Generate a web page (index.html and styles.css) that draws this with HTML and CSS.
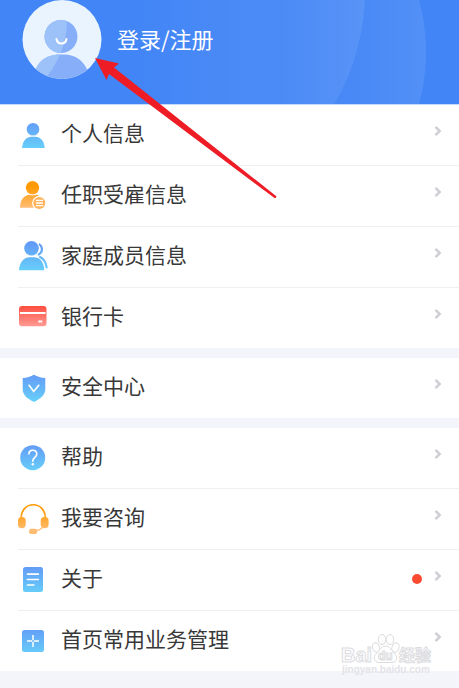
FILE: index.html
```html
<!DOCTYPE html>
<html lang="zh-CN">
<head>
<meta charset="utf-8">
<meta name="viewport" content="width=device-width, initial-scale=1">
<title>个人中心</title>
<link rel="stylesheet" href="styles.css">
</head>
<body>
<svg class="defs" aria-hidden="true">
  <defs>
    <linearGradient id="blue" x1="0" y1="0" x2="0" y2="32" gradientUnits="userSpaceOnUse"><stop offset=".1" stop-color="#639af6"/><stop offset="1" stop-color="#67d2fa"/></linearGradient>
    <linearGradient id="orange" x1="0" y1="0" x2="0" y2="32" gradientUnits="userSpaceOnUse"><stop offset=".25" stop-color="#ff9a05"/><stop offset=".9" stop-color="#ffbd74"/></linearGradient>
    <linearGradient id="red" x1="0" y1="5" x2="0" y2="25" gradientUnits="userSpaceOnUse"><stop offset="0" stop-color="#ff4e3f"/><stop offset="1" stop-color="#ff9a92"/></linearGradient>
    <symbol id="chevron" viewBox="0 0 8 12"><path d="M1.5 1.8 5.7 6 1.5 10.2" fill="none" stroke="#cfcfd5" stroke-width="2.5"/></symbol>
  </defs>
</svg>

<header class="header">
  <svg class="header-art" width="459" height="104" viewBox="0 0 459 104" aria-hidden="true">
    <defs>
      <linearGradient id="wave1" x1="130" y1="0" x2="365" y2="0" gradientUnits="userSpaceOnUse"><stop offset="0" stop-color="#fff" stop-opacity="0"/><stop offset=".65" stop-color="#fff" stop-opacity=".02"/><stop offset="1" stop-color="#fff" stop-opacity=".09"/></linearGradient>
      <linearGradient id="wave2" x1="130" y1="0" x2="426" y2="0" gradientUnits="userSpaceOnUse"><stop offset="0" stop-color="#fff" stop-opacity="0"/><stop offset=".35" stop-color="#fff" stop-opacity=".03"/><stop offset=".75" stop-color="#fff" stop-opacity=".03"/><stop offset="1" stop-color="#fff" stop-opacity=".09"/></linearGradient>
    </defs>
    <circle cx="230" cy="52" r="196" fill="url(#wave2)"/>
    <circle cx="137" cy="-10" r="228" fill="url(#wave1)"/>
  </svg>
  <a class="login" href="#login">
    <svg class="avatar" viewBox="0 0 80 80" aria-hidden="true">
      <defs>
        <clipPath id="disc"><circle cx="40" cy="39.500" r="39.500"/></clipPath>
        <clipPath id="person"><circle cx="39" cy="36.500" r="16.500"/><path d="M12 80C12 64 22 54.500 38 54.500h4c14 0 24 9.500 26 25.500Z"/></clipPath>
      </defs>
      <circle cx="40" cy="39.500" r="39.500" fill="#e9f4ff"/>
      <g clip-path="url(#disc)">
        <g clip-path="url(#person)">
          <path d="M0 0h80v80H0Z" fill="#87aff9"/>
          <path d="M0 0h43Q46 20 44 34 39 61 22 80H0Z" fill="#9dc2f9"/>
        </g>
      </g>
      <path d="M34.500 39c1 6 9 6 10 0" fill="none" stroke="#fff" stroke-width="2" stroke-linecap="round"/>
    </svg>
    <span class="login-text">登录/注册</span>
  </a>
</header>

<main>
  <ul class="group">
    <li><a class="row" href="#profile">
      <svg class="icon" viewBox="0 0 32 32" fill="url(#blue)" aria-hidden="true"><circle cx="15" cy="11.300" r="6.300"/><path d="M4 30C4.500 22.500 9 18.700 13.500 18.700h3.700c5 0 9.200 4 9.500 11.300Z"/></svg>
      <span class="label">个人信息</span><svg class="chevron" aria-hidden="true"><use href="#chevron"/></svg></a></li>
    <li><a class="row" href="#employment">
      <svg class="icon" viewBox="0 0 32 32" aria-hidden="true"><g fill="url(#orange)"><path d="M2 28.700C2 20.500 6 17 11 15.500h8l4.500 3V28.700Z"/><circle cx="14.500" cy="8.700" r="7.700" fill="#fff"/><circle cx="14.500" cy="8.700" r="6.700"/></g><circle cx="21.300" cy="24" r="7.200" fill="#fff"/><circle cx="21.300" cy="24" r="6" fill="#ffb45c"/><path d="M18 21.300h7M18 24h7M18 26.700h7" stroke="#fff" stroke-width="1.300"/></svg>
      <span class="label">任职受雇信息</span><svg class="chevron" aria-hidden="true"><use href="#chevron"/></svg></a></li>
    <li><a class="row" href="#family">
      <svg class="icon" viewBox="0 0 32 32" aria-hidden="true"><g fill="none" stroke="url(#blue)" stroke-linecap="round"><path d="M21.500 4.500c3.500 2.800 3.300 7.700-.8 10" stroke-width="2.200"/><path d="M22 17c4 2 6 5.500 6.700 10.500" stroke-width="2.100"/></g><g fill="url(#blue)"><circle cx="13.500" cy="8.300" r="8.200" fill="#fff"/><circle cx="13.500" cy="8.300" r="7.300"/><path d="M1 30.300C1.500 22 6 17.300 11.500 17.300h4.300c6 0 10.200 4.500 10.500 13Z"/></g></svg>
      <span class="label">家庭成员信息</span><svg class="chevron" aria-hidden="true"><use href="#chevron"/></svg></a></li>
    <li><a class="row" href="#cards">
      <svg class="icon" viewBox="0 0 32 32" aria-hidden="true"><rect x="1" y="5" width="27.500" height="20.300" rx="3" fill="url(#red)"/><path d="M2 12h25.500M20.300 20.500h4" stroke="#fff" stroke-width="1.800"/></svg>
      <span class="label">银行卡</span><svg class="chevron" aria-hidden="true"><use href="#chevron"/></svg></a></li>
  </ul>

  <ul class="group">
    <li><a class="row" href="#security">
      <svg class="icon" viewBox="0 0 32 32" aria-hidden="true"><path d="M16 3.700c3.500 2 7 3 11.300 3.300V18c0 6-4.500 9.500-11.300 13C9 27.500 4.700 24 4.700 18V7C9 6.700 12.500 5.700 16 3.700Z" fill="url(#blue)"/><path d="M10.700 13.800 15.700 20.500 21.200 13.800" fill="none" stroke="#fff" stroke-width="1.600"/></svg>
      <span class="label">安全中心</span><svg class="chevron" aria-hidden="true"><use href="#chevron"/></svg></a></li>
  </ul>

  <ul class="group">
    <li><a class="row" href="#help">
      <svg class="icon" viewBox="0 0 32 32" aria-hidden="true"><circle cx="14.700" cy="16.700" r="12.500" fill="url(#blue)"/><path d="M10.800 13.500c0-5.500 8-5.500 8-.5 0 3.200-4 3.500-4 6.800v1" fill="none" stroke="#fff" stroke-width="1.600"/><circle cx="14.800" cy="23.300" r="1.200" fill="#fff"/></svg>
      <span class="label">帮助</span><svg class="chevron" aria-hidden="true"><use href="#chevron"/></svg></a></li>
    <li><a class="row" href="#consult">
      <svg class="icon" viewBox="0 0 32 32" aria-hidden="true"><path d="M3.200 17C2.500-2 28-2 27.300 17" fill="none" stroke="url(#orange)" stroke-width="1.700"/><g fill="url(#orange)"><rect x="0" y="15" width="7.700" height="11.300" rx="3.700"/><rect x="22.700" y="15" width="7.900" height="11.300" rx="3.700"/><rect x="11" y="26.800" width="8.200" height="5.200" rx="2.600"/></g><path d="M18 28.500q5-.5 7-4" fill="none" stroke="#ffbd74" stroke-width="1.500"/></svg>
      <span class="label">我要咨询</span><svg class="chevron" aria-hidden="true"><use href="#chevron"/></svg></a></li>
    <li><a class="row" href="#about">
      <svg class="icon" viewBox="0 0 32 32" aria-hidden="true"><rect x="5" y="4" width="20" height="25" rx="2.500" fill="url(#blue)"/><path d="M9.500 11.200h10.800M9.500 16.500h10.800M9.500 22h6.300" stroke="#fff" stroke-width="1.700" stroke-linecap="round"/></svg>
      <span class="label">关于</span><span class="dot"></span><svg class="chevron" aria-hidden="true"><use href="#chevron"/></svg></a></li>
    <li><a class="row" href="#shortcuts">
      <svg class="icon" viewBox="0 0 32 32" aria-hidden="true"><rect x="4" y="6" width="22" height="22" rx="2.500" fill="url(#blue)"/><path d="M9 17h12M15 11v12" stroke="#fff" stroke-width="1.500"/><circle cx="15" cy="17" r="1" fill="#64b8f8"/></svg>
      <span class="label">首页常用业务管理</span><svg class="chevron" aria-hidden="true"><use href="#chevron"/></svg></a></li>
  </ul>
</main>

<svg class="pointer" width="190" height="150" viewBox="90 50 190 150" aria-hidden="true"><path d="M95 58 119 63.500 114 67.500 276.300 196.300Q276.500 198.500 274.500 198L109 74 106.500 80Z" fill="#ee1c25"/></svg>

<svg class="watermark" width="96" height="48" viewBox="338 632 96 48" aria-hidden="true">
  <text class="mark-main" x="341" y="662">Bai</text>
  <g fill="#fff" stroke="#dcdcdf" stroke-width="1">
    <ellipse cx="376" cy="647.500" rx="3.500" ry="4.800" transform="rotate(-20 376 647.500)"/>
    <ellipse cx="382" cy="639.500" rx="3.700" ry="5"/>
    <ellipse cx="390" cy="639.500" rx="3.700" ry="5"/>
    <ellipse cx="395.500" cy="647.500" rx="3.500" ry="4.800" transform="rotate(20 395.500 647.500)"/>
    <path d="M385.500 646c5 0 6 5 9.500 8 3 3 2 8.500-3 8.500h-13c-5 0-6-5.500-3-8.500 3.500-3 4.500-8 9.500-8Z"/>
  </g>
  <text class="mark-du" x="378" y="660">du</text>
  <text class="mark-cn" x="399" y="661">经验</text>
  <text class="mark-url" x="342" y="673">jingyan.baidu.com</text>
</svg>
</body>
</html>
```
FILE: styles.css
```css
* {
  box-sizing: border-box;
}

body {
  position: relative;
  margin: 0;
  min-height: 100vh;
  background: #f4f5fa;
  color: #383838;
  font-family: "Noto Sans CJK SC", sans-serif;
}

a {
  color: inherit;
  text-decoration: none;
}

.defs {
  position: absolute;
  width: 0;
  height: 0;
}

.header {
  position: relative;
  padding: 0 22px 24px;
  border-bottom: 1px solid #c4dafc;
  background: #4285f6;
  overflow: hidden;
}

.header-art {
  position: absolute;
  top: 0;
  left: 0;
}

.login {
  position: relative;
  display: flex;
  align-items: center;
  gap: 15px;
  color: #fff;
  font-size: 22px;
  line-height: 32px;
}

.login-text {
  padding-bottom: 4px;
}

.avatar {
  width: 80px;
  height: 80px;
}

.group {
  margin: 0 0 10px;
  padding: 0 0 0 18px;
  background: #fff;
  list-style: none;
}

.group li + li {
  border-top: 1px solid #efeff1;
}

.row {
  display: flex;
  align-items: center;
  height: 60px;
  padding: 0 17px 2px 0;
  font-size: 21px;
  line-height: 30px;
}

.icon {
  flex: none;
  width: 32px;
  height: 32px;
  margin-right: 11px;
}

.label {
  flex: 1;
  padding-bottom: 4px;
}

.dot {
  width: 10px;
  height: 10px;
  margin-right: 12px;
  border-radius: 50%;
  background: #fa4b32;
}

.chevron {
  width: 8px;
  height: 12px;
  margin-bottom: 6px;
}

.pointer {
  position: absolute;
  top: 50px;
  left: 90px;
}

.watermark {
  position: absolute;
  top: 632px;
  right: 25px;
  font-family: "Liberation Sans", "Noto Sans CJK SC", sans-serif;
  font-weight: 700;
}

.watermark text {
  fill: #fff;
  stroke: #dcdcdf;
  stroke-width: 1px;
}

.watermark .mark-main {
  font-size: 20px;
}

.watermark .mark-du {
  font-size: 12px;
}

.watermark .mark-cn {
  font-size: 16px;
}

.watermark .mark-url {
  fill: #e3e3e7;
  stroke: none;
  font-size: 10px;
}
```
